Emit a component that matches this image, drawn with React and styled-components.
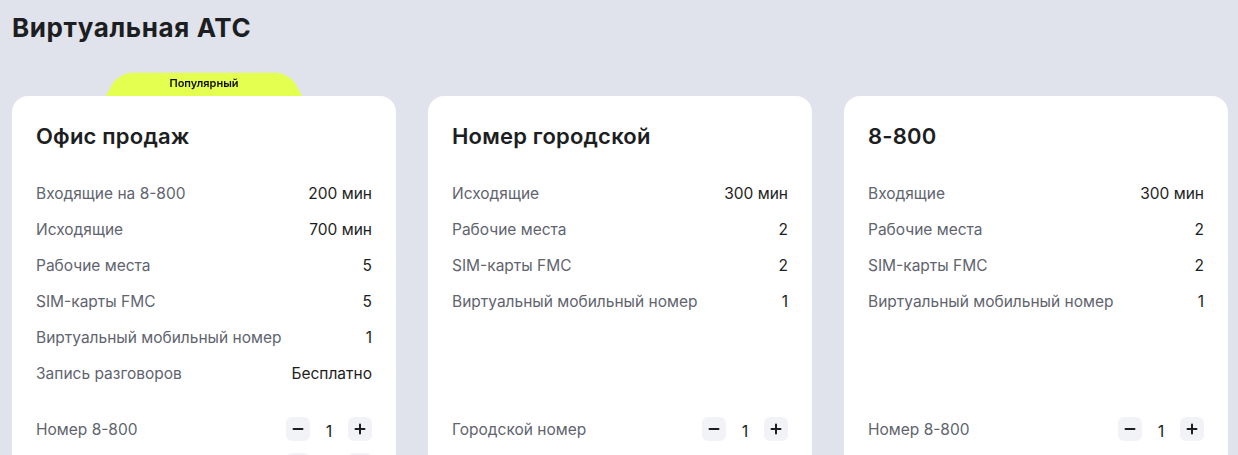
import React from "react";
import styled, { createGlobalStyle } from "styled-components";

const GlobalStyle = createGlobalStyle`
  * { box-sizing: border-box; }
  body {
    margin: 0;
    background: #e0e3eb;
    font-family: Inter, "Noto Sans", sans-serif;
    color: #1c1e22;
  }
`;

const Page = styled.div`
  padding: 12px 10px 40px 12px;
`;

const Heading = styled.h1`
  margin: 0;
  font-size: 26px;
  line-height: 32px;
  font-weight: 700;
  letter-spacing: 0.6px;
  color: #1c1e22;
`;

const Grid = styled.div`
  display: grid;
  grid-template-columns: repeat(3, 384px);
  column-gap: 32px;
  margin-top: 52px;
  align-items: start;
`;

const Card = styled.div`
  position: relative;
  background: #fff;
  border-radius: 16px;
  padding: 24px 24px 24px;
`;

const Badge = styled.div`
  position: absolute;
  left: 50%;
  bottom: 100%;
  width: 196px;
  height: 28px;
  transform: translateX(-50%);
  display: flex;
  align-items: center;
  justify-content: center;
  font-size: 11px;
  font-weight: 600;
  color: #111;

  &::before {
    content: "";
    position: absolute;
    inset: 0;
    background: #e4ff50;
    border-radius: 16px 16px 0 0;
    transform: perspective(60px) rotateX(18deg);
    transform-origin: bottom;
    z-index: 0;
  }

  span {
    position: relative;
    top: 1px;
  }
`;

const Title = styled.h2`
  margin: 0;
  font-size: 22px;
  line-height: 32px;
  font-weight: 600;
  letter-spacing: 0.2px;
  color: #1c1e22;
`;

const Features = styled.div`
  margin-top: 23px;
  min-height: 216px;
  display: flex;
  flex-direction: column;
`;

const Row = styled.div`
  display: flex;
  align-items: center;
  justify-content: space-between;
  height: 36px;
  font-size: 15.5px;
`;

const Label = styled.span`
  color: #5f646e;
`;

const Value = styled.span`
  color: #1c1e22;
`;

const Options = styled.div`
  margin-top: 20px;
  display: flex;
  flex-direction: column;
`;

const Stepper = styled.div`
  display: flex;
  align-items: center;
`;

const StepButton = styled.button`
  width: 24px;
  height: 24px;
  border: none;
  padding: 0;
  border-radius: 6px;
  background: #f2f3f7;
  display: flex;
  align-items: center;
  justify-content: center;
  cursor: pointer;
`;

const Count = styled.span`
  width: 38px;
  text-align: center;
  font-size: 16px;
  padding-top: 4px;
  color: #1c1e22;
`;

const MinusIcon = () => (
  <svg width="12" height="12" viewBox="0 0 12 12">
    <path d="M1.5 6h9" stroke="#1c1e22" strokeWidth="2" strokeLinecap="round" />
  </svg>
);

const PlusIcon = () => (
  <svg width="12" height="12" viewBox="0 0 12 12">
    <path d="M1.5 6h9M6 1.5v9" stroke="#1c1e22" strokeWidth="2" strokeLinecap="round" />
  </svg>
);

const plans = [
  {
    title: "Офис продаж",
    popular: true,
    features: [
      ["Входящие на 8-800", "200 мин"],
      ["Исходящие", "700 мин"],
      ["Рабочие места", "5"],
      ["SIM-карты FMC", "5"],
      ["Виртуальный мобильный номер", "1"],
      ["Запись разговоров", "Бесплатно"],
    ],
    options: ["Номер 8-800", "Городской номер"],
  },
  {
    title: "Номер городской",
    features: [
      ["Исходящие", "300 мин"],
      ["Рабочие места", "2"],
      ["SIM-карты FMC", "2"],
      ["Виртуальный мобильный номер", "1"],
    ],
    options: ["Городской номер"],
  },
  {
    title: "8-800",
    features: [
      ["Входящие", "300 мин"],
      ["Рабочие места", "2"],
      ["SIM-карты FMC", "2"],
      ["Виртуальный мобильный номер", "1"],
    ],
    options: ["Номер 8-800"],
  },
];

const App = () => {
  return (
    <Page>
      <GlobalStyle />
      <Heading>Виртуальная АТС</Heading>
      <Grid>
        {plans.map((plan) => (
          <Card key={plan.title}>
            {plan.popular && (
              <Badge>
                <span>Популярный</span>
              </Badge>
            )}
            <Title>{plan.title}</Title>
            <Features>
              {plan.features.map(([label, value]) => (
                <Row key={label}>
                  <Label>{label}</Label>
                  <Value>{value}</Value>
                </Row>
              ))}
            </Features>
            <Options>
              {plan.options.map((opt) => (
                <Row key={opt}>
                  <Label>{opt}</Label>
                  <Stepper>
                    <StepButton aria-label="Уменьшить"><MinusIcon /></StepButton>
                    <Count>1</Count>
                    <StepButton aria-label="Увеличить"><PlusIcon /></StepButton>
                  </Stepper>
                </Row>
              ))}
            </Options>
          </Card>
        ))}
      </Grid>
    </Page>
  );
};

export default App;
